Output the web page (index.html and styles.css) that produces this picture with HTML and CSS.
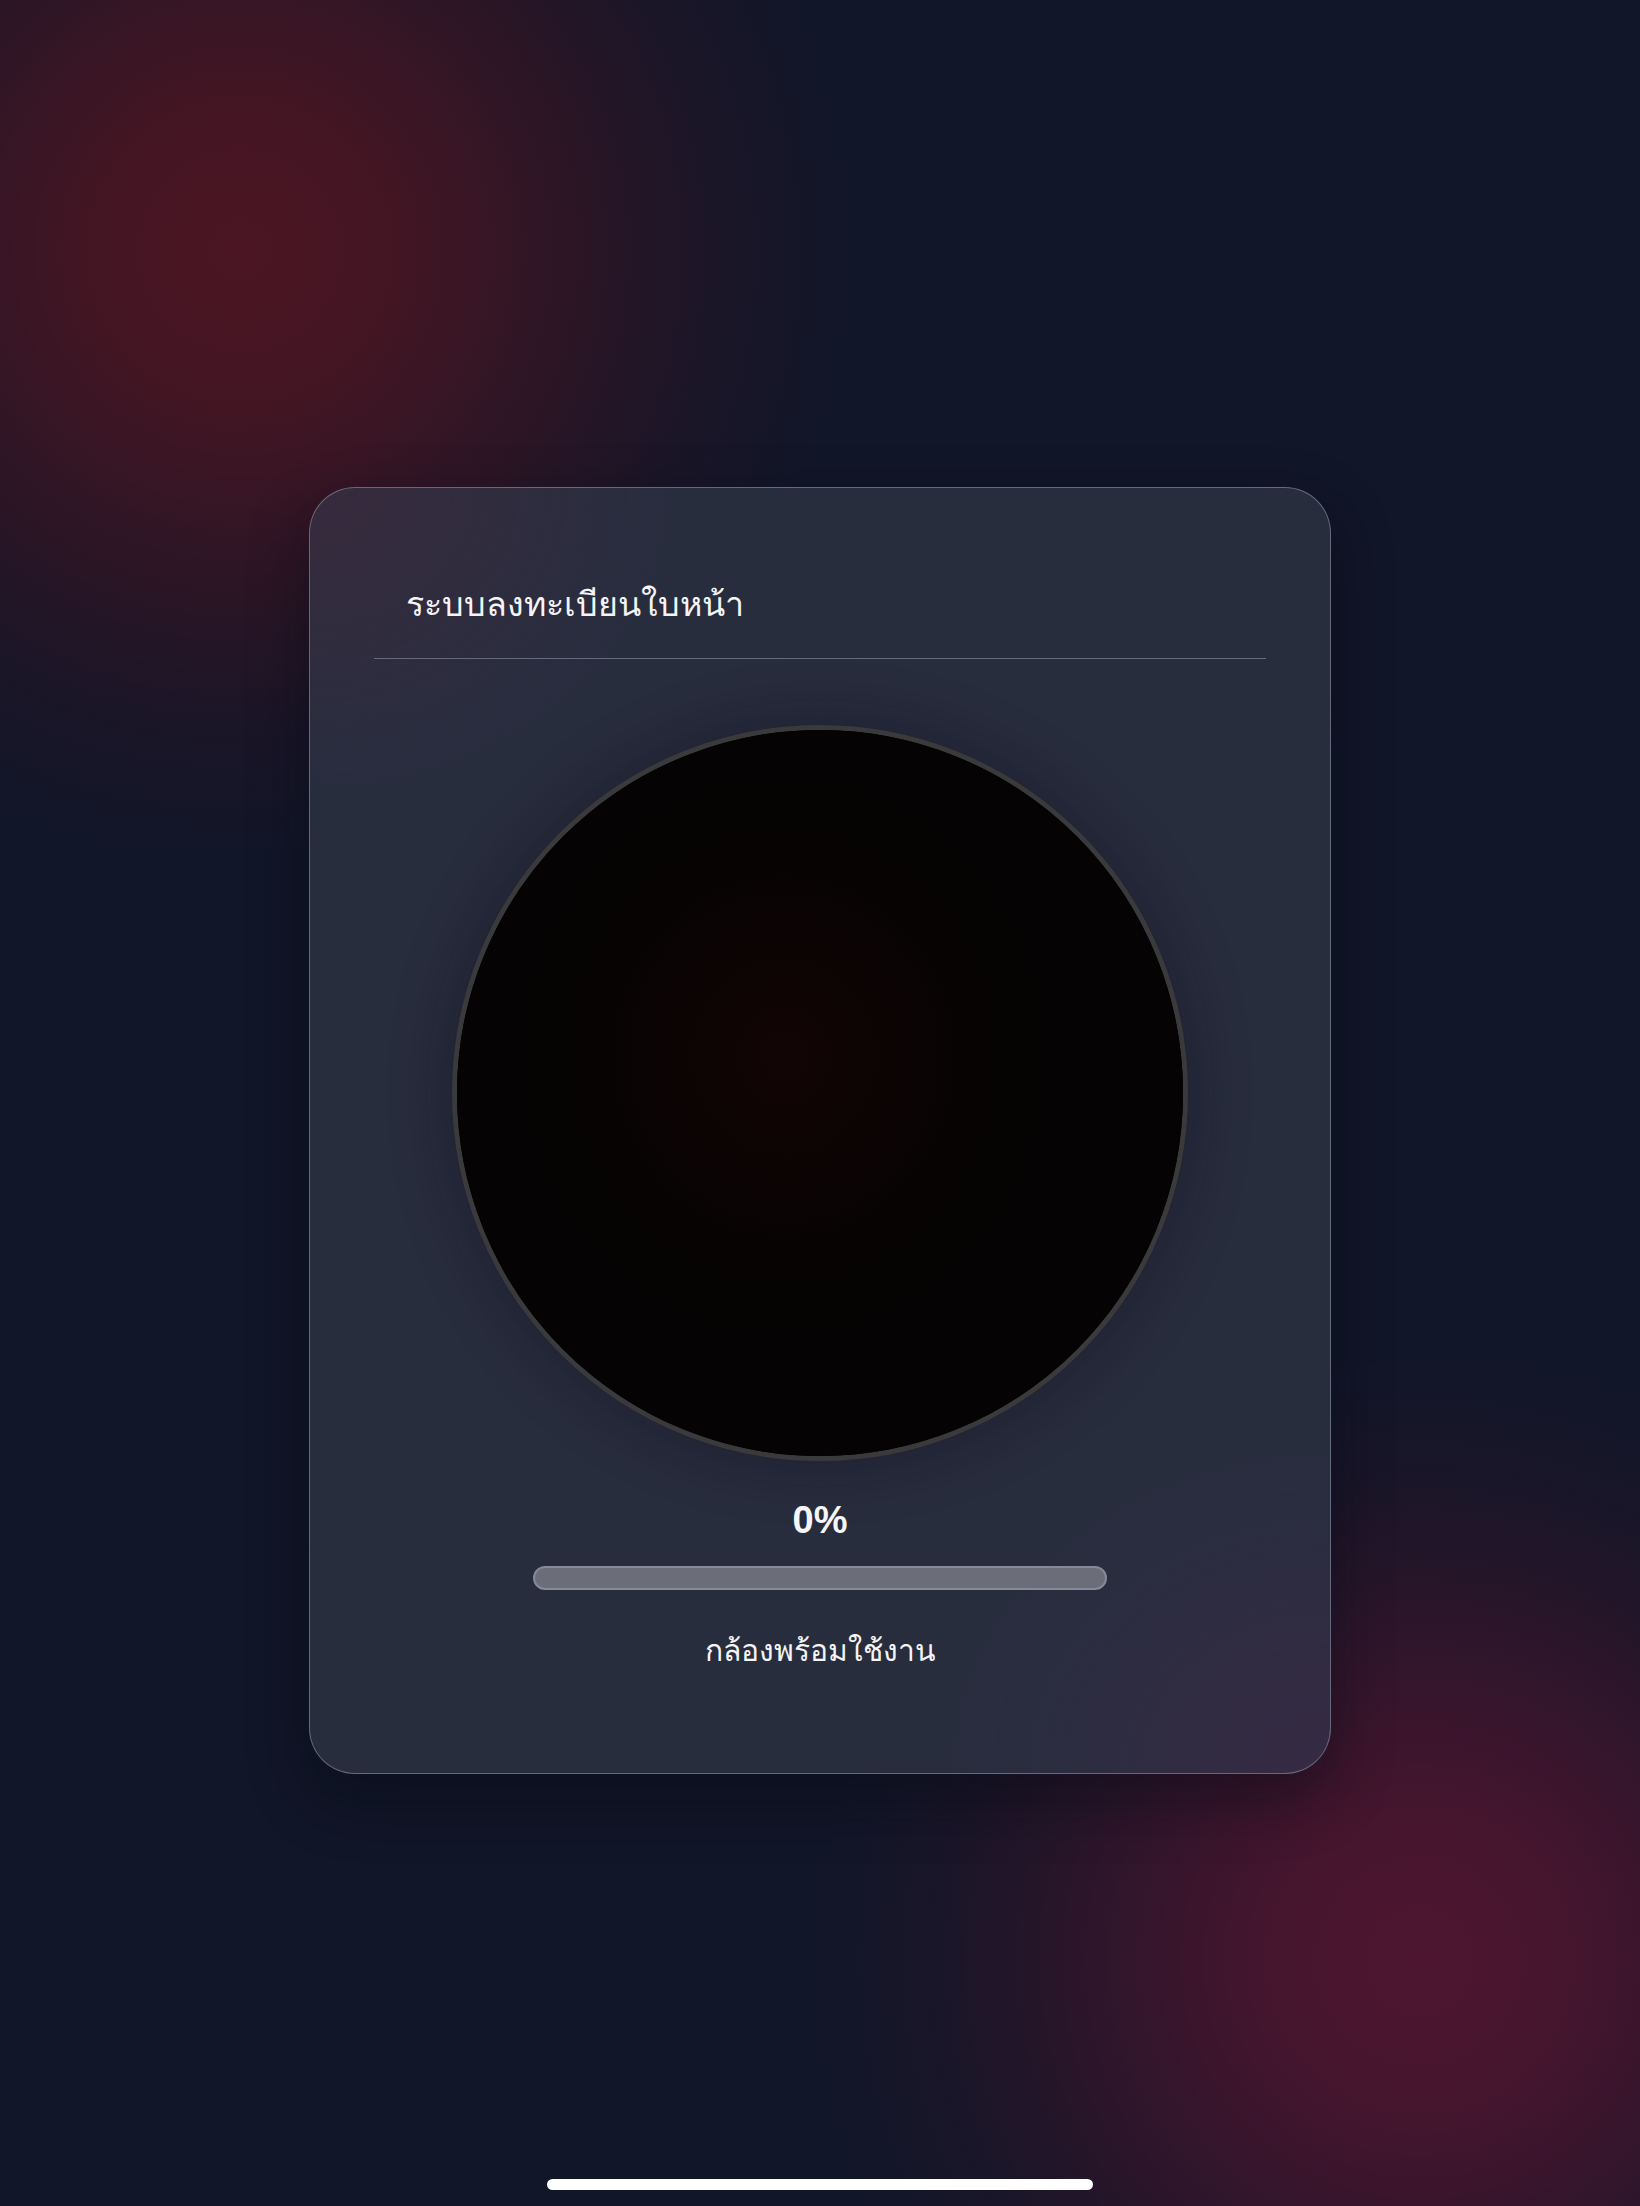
FILE: index.html
```html
<!DOCTYPE html>
<html lang="th">
<head>
<meta charset="utf-8">
<title>ระบบลงทะเบียนใบหน้า</title>
<link rel="stylesheet" href="styles.css">
</head>
<body>
<div class="backdrop">
  <div class="blob blob-tl"></div>
  <div class="blob blob-br"></div>
</div>
<main class="page">
  <section class="card">
    <header class="card-header">
      <h1 class="title">ระบบลงทะเบียนใบหน้า</h1>
    </header>
    <div class="camera">
      <div class="camera-feed"></div>
    </div>
    <div class="progress-value">0%</div>
    <div class="progress-track"><div class="progress-fill" style="width:0%"></div></div>
    <p class="status">กล้องพร้อมใช้งาน</p>
  </section>
</main>
<div class="home-indicator"></div>
</body>
</html>
```
FILE: styles.css
```css
html, body {
  margin: 0;
  padding: 0;
}
html {
  overflow: hidden;
}
body {
  width: 1640px;
  height: 2206px;
  overflow: hidden;
  position: relative;
  background: #111628;
  font-family: "Noto Sans", "Liberation Sans", sans-serif;
  color: #ffffff;
}
.backdrop {
  position: absolute;
  left: 0;
  top: 0;
  width: 1640px;
  height: 2206px;
  overflow: hidden;
}
.blob {
  position: absolute;
  border-radius: 50%;
  pointer-events: none;
}
.blob-tl {
  left: -360px;
  top: -350px;
  width: 1200px;
  height: 1200px;
  background: radial-gradient(circle at center, rgba(76,21,35,1) 0%, rgba(72,21,35,0.92) 18%, rgba(60,21,36,0.7) 36%, rgba(40,20,38,0.4) 56%, rgba(17,22,40,0) 72%);
}
.blob-br {
  left: 820px;
  top: 1360px;
  width: 1200px;
  height: 1200px;
  background: radial-gradient(circle at center, rgba(78,21,48,1) 0%, rgba(74,21,47,0.92) 18%, rgba(62,21,45,0.7) 36%, rgba(40,20,40,0.4) 56%, rgba(17,22,40,0) 72%);
}
.page {
  position: relative;
  display: flex;
  justify-content: center;
  padding-top: 487px;
}
.card {
  box-sizing: border-box;
  width: 1022px;
  height: 1287px;
  border: 1px solid rgba(150,155,175,0.55);
  border-radius: 46px;
  padding: 0 64px;
  display: flex;
  flex-direction: column;
  align-items: center;
  background:
    radial-gradient(ellipse 360px 300px at 0% 0%, rgba(70,40,60,0.5), rgba(70,40,60,0) 100%),
    radial-gradient(ellipse 380px 320px at 100% 100%, rgba(68,40,72,0.5), rgba(68,40,72,0) 100%),
    #282d3e;
  box-shadow: 0 24px 60px rgba(5,8,18,0.45);
}
.card-header {
  align-self: stretch;
  border-bottom: 1px solid rgba(150,155,175,0.55);
  padding: 88px 32px 28px;
}
.title {
  margin: 0;
  font-size: 34px;
  font-weight: 400;
  line-height: 54px;
  color: #f4f4f6;
}
.camera {
  margin-top: 66px;
  width: 736px;
  height: 736px;
  box-sizing: border-box;
  border-radius: 50%;
  border: 5px solid #3a3a3c;
  overflow: hidden;
  box-shadow: 0 0 60px rgba(10,12,22,0.45);
  background: #040202;
}
.camera-feed {
  width: 100%;
  height: 100%;
  background: radial-gradient(ellipse 300px 320px at 45% 45%, rgba(20,5,5,0.9), rgba(10,3,3,0.5) 60%, rgba(4,2,2,0) 100%), #050303;
}
.progress-value {
  margin-top: 37px;
  font-family: "Liberation Sans", Arial, sans-serif;
  font-weight: 700;
  font-size: 38px;
  line-height: 44px;
  color: #f6f6f8;
}
.progress-track {
  margin-top: 24px;
  width: 574px;
  height: 24px;
  box-sizing: border-box;
  border-radius: 12px;
  border: 2px solid #868a96;
  background: #6b6e79;
  overflow: hidden;
}
.progress-fill {
  height: 100%;
  background: #4f8cff;
}
.status {
  margin: 38px 0 0;
  font-size: 30px;
  line-height: 44px;
  color: #f4f4f6;
}
.home-indicator {
  position: absolute;
  left: 547px;
  top: 2179px;
  width: 546px;
  height: 11px;
  border-radius: 6px;
  background: #ffffff;
}
```
